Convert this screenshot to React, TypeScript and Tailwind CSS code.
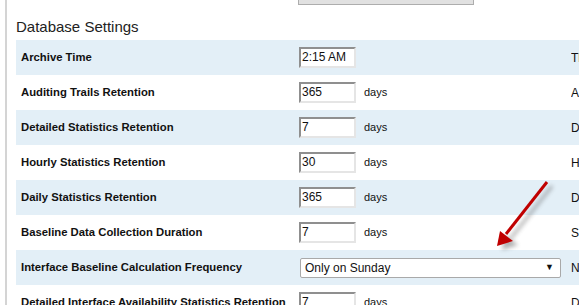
import React from "react";

type Row = { label: string; kind: "time" | "days" | "select"; value: string; right: string };

const rows: Row[] = [
  { label: "Archive Time", kind: "time", value: "2:15 AM", right: "Th" },
  { label: "Auditing Trails Retention", kind: "days", value: "365", right: "A" },
  { label: "Detailed Statistics Retention", kind: "days", value: "7", right: "D" },
  { label: "Hourly Statistics Retention", kind: "days", value: "30", right: "H" },
  { label: "Daily Statistics Retention", kind: "days", value: "365", right: "D" },
  { label: "Baseline Data Collection Duration", kind: "days", value: "7", right: "S" },
  { label: "Interface Baseline Calculation Frequency", kind: "select", value: "Only on Sunday", right: "N" },
  { label: "Detailed Interface Availability Statistics Retention", kind: "days", value: "7", right: "D" },
];

function TextBox({ value }: { value: string }) {
  return (
    <div className="w-[57px] h-[21px] bg-white border-2 border-t-[#8f8f8f] border-l-[#8f8f8f] border-r-[#e5e5e5] border-b-[#e5e5e5] pl-[1px] text-[12px] leading-[17px] text-[#111]">
      {value}
    </div>
  );
}

export default function App() {
  return (
    <div
      className="relative w-[579px] h-[305px] overflow-hidden bg-white"
      style={{ fontFamily: '"Liberation Sans", Arial, sans-serif' }}
    >
      <div className="flex h-full">
        <div className="w-[5px] shrink-0" />
        <div className="w-[2px] shrink-0 bg-[#d4d4d4]" />
        <div className="w-[9px] shrink-0" />
        <div className="flex-1 flex flex-col">
          <div className="h-[5px] shrink-0 flex">
            <div className="w-[282px]" />
            <div className="w-[176px] h-[5px] bg-[#e1e1e1] border border-t-0 border-[#adadad]" />
          </div>
          <div className="h-[35px] shrink-0 flex items-end pb-[3px] text-[15px] text-[#222] leading-[20px]">
            Database Settings
          </div>
          {rows.map((r, i) => (
            <div
              key={i}
              className={`h-[35px] shrink-0 flex items-center ${i % 2 === 0 ? "bg-[#e3eff7]" : "bg-white"}`}
            >
              <div className="w-[283px] pl-[5px] text-[11.3px] font-bold text-[#111] whitespace-nowrap">{r.label}</div>
              {r.kind === "select" ? (
                <div className="w-[261px] h-[20px] ml-[1px] bg-white border border-[#a9a9a9] rounded-[2px] flex items-center justify-between pl-[4px] pr-[6px] text-[12px] text-[#111]">
                  <span>{r.value}</span>
                  <span className="text-[9px]">▼</span>
                </div>
              ) : (
                <>
                  <TextBox value={r.value} />
                  <div className="w-[208px] pl-[8px] text-[11px] text-[#111]">{r.kind === "days" ? "days" : ""}</div>
                </>
              )}
              <div className="flex-1" />
              <div className="w-[8px] text-[12px] text-[#111] overflow-hidden whitespace-nowrap">{r.right}</div>
            </div>
          ))}
        </div>
      </div>
      <svg className="absolute left-0 top-0" width="579" height="305" viewBox="0 0 579 305">
        <defs>
          <filter id="sh" x="-50%" y="-50%" width="200%" height="200%">
            <feGaussianBlur stdDeviation="2" />
          </filter>
        </defs>
        <g transform="translate(5,4)" filter="url(#sh)" opacity="0.45">
          <line x1="547" y1="182" x2="506" y2="234" stroke="#555" strokeWidth="3" />
          <polygon points="497,246 500,231 513,241" fill="#555" />
        </g>
        <line x1="547" y1="182" x2="506" y2="234" stroke="#c00000" strokeWidth="3" />
        <polygon points="497,246 500,231 513,241" fill="#c00000" />
      </svg>
    </div>
  );
}
